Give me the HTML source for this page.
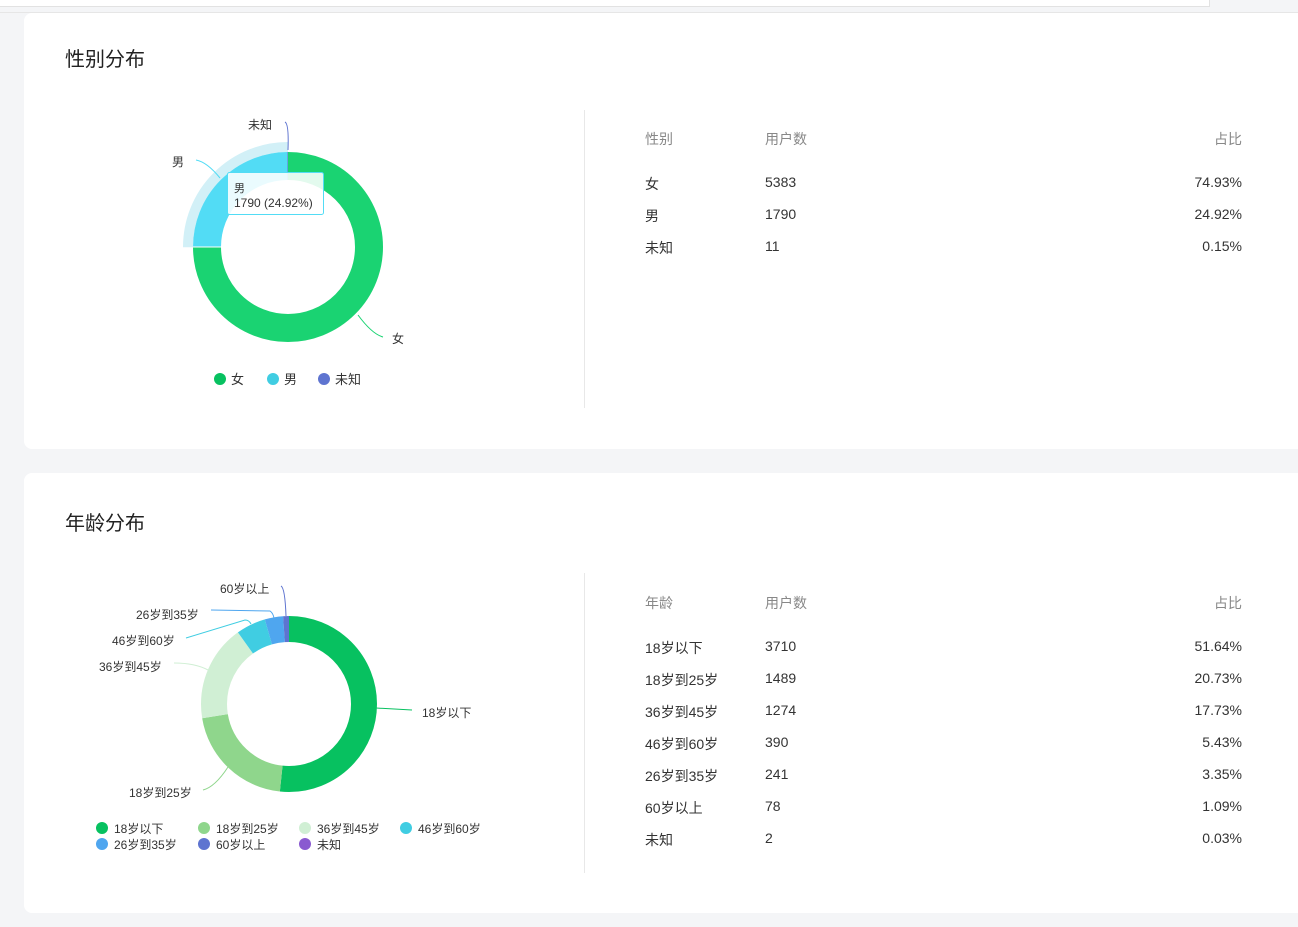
<!DOCTYPE html>
<html><head><meta charset="utf-8"><style>
*{margin:0;padding:0;box-sizing:border-box}
body{width:1298px;height:927px;background:#f4f5f7;position:relative;overflow:hidden;font-family:"Liberation Sans","Noto Sans CJK SC",sans-serif;color:#333}
.top{position:absolute;left:0;top:0;width:1210px;height:7px;background:#fff;border-bottom:1px solid #e2e2e2;border-right:1px solid #e2e2e2}
.line{position:absolute;left:0;top:12px;width:1298px;height:1px;background:#e6e6e6}
.card{position:absolute;left:24px;width:1300px;background:#fff;border-radius:8px}
.title{position:absolute;left:41px;font-size:20px;color:#222}
.div{position:absolute;left:560px;width:1px;background:#e8e8e8}
.t{position:absolute;font-size:14px;color:#333;white-space:nowrap}
.h{color:#888}
.r{text-align:right;width:200px}
svg{position:absolute;left:0;top:0}
svg text{font-family:"Liberation Sans","Noto Sans CJK SC",sans-serif;font-size:12px;fill:#333}
</style></head><body>
<div class="top"></div><div class="line"></div>
<div class="card" style="top:13px;height:436px">
 <div class="title" style="top:30px">性别分布</div>
 <div class="div" style="top:97px;height:298px"></div>
 <div class="t h" style="left:621px;top:116px">性别</div>
 <div class="t h" style="left:741px;top:116px">用户数</div>
 <div class="t h r" style="left:1018px;top:116px">占比</div>
 <div class="t" style="left:621px;top:161px">女</div><div class="t" style="left:741px;top:161px">5383</div><div class="t r" style="left:1018px;top:161px">74.93%</div>
 <div class="t" style="left:621px;top:193px">男</div><div class="t" style="left:741px;top:193px">1790</div><div class="t r" style="left:1018px;top:193px">24.92%</div>
 <div class="t" style="left:621px;top:225px">未知</div><div class="t" style="left:741px;top:225px">11</div><div class="t r" style="left:1018px;top:225px">0.15%</div>
</div>
<div class="card" style="top:473px;height:440px">
 <div class="title" style="top:34px">年龄分布</div>
 <div class="div" style="top:100px;height:300px"></div>
 <div class="t h" style="left:621px;top:120px">年龄</div>
 <div class="t h" style="left:741px;top:120px">用户数</div>
 <div class="t h r" style="left:1018px;top:120px">占比</div>
 <div class="t" style="left:621px;top:165px">18岁以下</div><div class="t" style="left:741px;top:165px">3710</div><div class="t r" style="left:1018px;top:165px">51.64%</div>
 <div class="t" style="left:621px;top:197px">18岁到25岁</div><div class="t" style="left:741px;top:197px">1489</div><div class="t r" style="left:1018px;top:197px">20.73%</div>
 <div class="t" style="left:621px;top:229px">36岁到45岁</div><div class="t" style="left:741px;top:229px">1274</div><div class="t r" style="left:1018px;top:229px">17.73%</div>
 <div class="t" style="left:621px;top:261px">46岁到60岁</div><div class="t" style="left:741px;top:261px">390</div><div class="t r" style="left:1018px;top:261px">5.43%</div>
 <div class="t" style="left:621px;top:293px">26岁到35岁</div><div class="t" style="left:741px;top:293px">241</div><div class="t r" style="left:1018px;top:293px">3.35%</div>
 <div class="t" style="left:621px;top:325px">60岁以上</div><div class="t" style="left:741px;top:325px">78</div><div class="t r" style="left:1018px;top:325px">1.09%</div>
 <div class="t" style="left:621px;top:357px">未知</div><div class="t" style="left:741px;top:357px">2</div><div class="t r" style="left:1018px;top:357px">0.03%</div>
</div>
<svg width="1298" height="927" viewBox="0 0 1298 927">
 <g transform="rotate(-90 288 247)">
  <circle cx="288" cy="247" r="100" fill="none" stroke="#d2f0f7" stroke-width="10" stroke-dasharray="157.7 628.3" stroke-dashoffset="-470.8"/>
  <circle cx="288" cy="247" r="81" fill="none" stroke="#1ad372" stroke-width="28" stroke-dasharray="381.35 508.94"/>
  <circle cx="288" cy="247" r="81" fill="none" stroke="#52dcf5" stroke-width="28" stroke-dasharray="126.83 508.94" stroke-dashoffset="-381.35"/>
  <circle cx="288" cy="247" r="81" fill="none" stroke="#5e74d0" stroke-width="28" stroke-dasharray="0.76 508.94" stroke-dashoffset="-508.18"/>
 </g>
 <line x1="193" y1="247" x2="221" y2="247" stroke="#fff" stroke-width="1"/>
 <path d="M285 122 Q289 124 288 150" fill="none" stroke="#5e74d0"/>
 <path d="M196 160 Q207 162 220 178" fill="none" stroke="#52dcf5"/>
 <path d="M358 315 Q372 334 383 337" fill="none" stroke="#1ad372"/>
 <text x="248" y="129">未知</text><text x="172" y="166">男</text><text x="392" y="343">女</text>
 <rect x="227.5" y="172.5" width="96" height="42" fill="rgba(255,255,255,0.88)" stroke="#52dcf5" rx="2"/>
 <text x="234" y="192" style="font-size:11px">男</text><text x="234" y="207">1790 (24.92%)</text>
 <circle cx="220" cy="379" r="6" fill="#07c160"/><text x="231" y="384" style="font-size:13px">女</text>
 <circle cx="273" cy="379" r="6" fill="#40cde2"/><text x="284" y="384" style="font-size:13px">男</text>
 <circle cx="324" cy="379" r="6" fill="#5e74d0"/><text x="335" y="384" style="font-size:13px">未知</text>
 <g transform="rotate(-90 289 704)">
  <circle cx="289" cy="704" r="75" fill="none" stroke="#07c160" stroke-width="26" stroke-dasharray="243.35 471.24"/>
  <circle cx="289" cy="704" r="75" fill="none" stroke="#8fd68c" stroke-width="26" stroke-dasharray="97.69 471.24" stroke-dashoffset="-243.35"/>
  <circle cx="289" cy="704" r="75" fill="none" stroke="#d0efd4" stroke-width="26" stroke-dasharray="83.55 471.24" stroke-dashoffset="-341.04"/>
  <circle cx="289" cy="704" r="75" fill="none" stroke="#40cde2" stroke-width="26" stroke-dasharray="25.59 471.24" stroke-dashoffset="-424.59"/>
  <circle cx="289" cy="704" r="75" fill="none" stroke="#4fa6ef" stroke-width="26" stroke-dasharray="15.79 471.24" stroke-dashoffset="-450.18"/>
  <circle cx="289" cy="704" r="75" fill="none" stroke="#5e74d0" stroke-width="26" stroke-dasharray="5.14 471.24" stroke-dashoffset="-465.97"/>
 </g>
 <path d="M376 708 L412 710" fill="none" stroke="#07c160"/>
 <path d="M228 767 Q215 787 203 790" fill="none" stroke="#8fd68c"/>
 <path d="M174 663 Q195 663 208 670" fill="none" stroke="#d0efd4"/>
 <path d="M186 638 L245 620 Q249 620 251 624" fill="none" stroke="#40cde2"/>
 <path d="M211 610 L270 611 Q273 613 274 618" fill="none" stroke="#4fa6ef"/>
 <path d="M281 586 Q285 588 286 616" fill="none" stroke="#5e74d0"/>
 <text x="220" y="593">60岁以上</text><text x="136" y="619">26岁到35岁</text><text x="112" y="645">46岁到60岁</text>
 <text x="99" y="671">36岁到45岁</text><text x="422" y="717">18岁以下</text><text x="129" y="797">18岁到25岁</text>
 <circle cx="102" cy="828" r="6" fill="#07c160"/><text x="114" y="833">18岁以下</text>
 <circle cx="204" cy="828" r="6" fill="#8fd68c"/><text x="216" y="833">18岁到25岁</text>
 <circle cx="305" cy="828" r="6" fill="#d0efd4"/><text x="317" y="833">36岁到45岁</text>
 <circle cx="406" cy="828" r="6" fill="#40cde2"/><text x="418" y="833">46岁到60岁</text>
 <circle cx="102" cy="844" r="6" fill="#4fa6ef"/><text x="114" y="849">26岁到35岁</text>
 <circle cx="204" cy="844" r="6" fill="#5e74d0"/><text x="216" y="849">60岁以上</text>
 <circle cx="305" cy="844" r="6" fill="#8a5ad0"/><text x="317" y="849">未知</text>
</svg>
</body></html>
